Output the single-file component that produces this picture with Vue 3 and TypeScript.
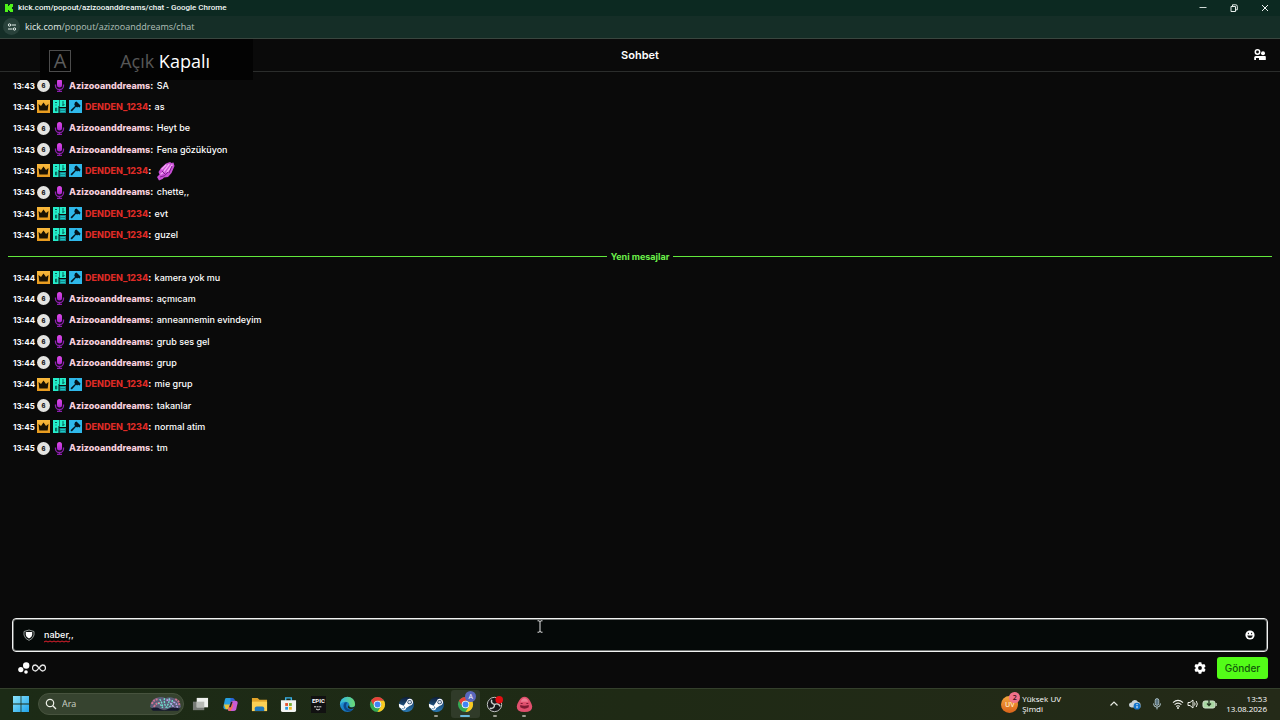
<script setup lang="ts">
import { ref } from 'vue'

interface Message {
  time: string
  user: 'Azizooanddreams' | 'DENDEN_1234'
  text: string
  emote?: boolean
}

const host = 'Azizooanddreams'
const mod = 'DENDEN_1234'

const earlier: Message[] = [
  { time: '13:43', user: host, text: 'SA' },
  { time: '13:43', user: mod, text: 'as' },
  { time: '13:43', user: host, text: 'Heyt be' },
  { time: '13:43', user: host, text: 'Fena gözüküyon' },
  { time: '13:43', user: mod, text: '', emote: true },
  { time: '13:43', user: host, text: 'chette,,' },
  { time: '13:43', user: mod, text: 'evt' },
  { time: '13:43', user: mod, text: 'guzel' },
]

const recent: Message[] = [
  { time: '13:44', user: mod, text: 'kamera yok mu' },
  { time: '13:44', user: host, text: 'açmıcam' },
  { time: '13:44', user: host, text: 'anneannemin evindeyim' },
  { time: '13:44', user: host, text: 'grub ses gel' },
  { time: '13:44', user: host, text: 'grup' },
  { time: '13:44', user: mod, text: 'mie grup' },
  { time: '13:45', user: host, text: 'takanlar' },
  { time: '13:45', user: mod, text: 'normal atim' },
  { time: '13:45', user: host, text: 'tm' },
]

const rows: (Message | null)[] = [...earlier, null, ...recent]
const draft = ref('naber,,')
const query = ref('')
</script>

<template>
  <div class="screen">
    <svg class="defs" aria-hidden="true">
      <defs>
        <linearGradient id="micG" x1="0" y1="0" x2="0" y2="1"><stop offset="0" stop-color="#e04be8" /><stop offset="1" stop-color="#a828d0" /></linearGradient>
        <linearGradient id="crownG" x1="0" y1="0" x2="0" y2="1"><stop offset="0" stop-color="#f9b93c" /><stop offset="1" stop-color="#e79a1e" /></linearGradient>
        <linearGradient id="winG" x1="0" y1="0" x2="1" y2="1"><stop offset="0" stop-color="#8ce4fb" /><stop offset="1" stop-color="#1fa3ea" /></linearGradient>
        <linearGradient id="edgeG" x1="0" y1="0" x2="1" y2="1"><stop offset="0" stop-color="#28a4e2" /><stop offset="1" stop-color="#0c59a4" /></linearGradient>
        <linearGradient id="edgeT" x1="0" y1="0" x2="1" y2="0"><stop offset="0" stop-color="#2fb7e8" /><stop offset="1" stop-color="#6edb70" /></linearGradient>
        <linearGradient id="steamG" x1="0" y1="0" x2="0" y2="1"><stop offset="0" stop-color="#0c1c38" /><stop offset="1" stop-color="#2a7cb8" /></linearGradient>
        <symbol id="steam" viewBox="0 0 18 18">
          <circle cx="9" cy="9" r="8" fill="url(#steamG)" />
          <path d="M1 8.300 6 10.200 9.200 5.500Q10 2.800 12.500 2.900q3.300.3 3.400 3.800-.3 3.200-3.500 3.500L8.800 12.800Q8.200 15.200 5.900 15.200 4 15 3.300 13.200L1.400 12Q.8 10 1 8.300Z" fill="#fff" />
          <circle cx="12.300" cy="6.500" r="2.300" fill="#27476e" />
          <circle cx="12.300" cy="6.500" r="1.400" fill="#dfe8f0" />
          <path d="M4.500 13.200q1.500 1 2.600-.4.500-1.300-.9-2" fill="none" stroke="#2d6a9c" stroke-width=".8" />
        </symbol>
        <symbol id="chrome" viewBox="0 0 18 18">
          <circle cx="9" cy="9" r="8" fill="#34a853" />
          <path d="M2.100 5A8 8 0 0 1 15.900 5H9A4 4 0 0 0 5.500 11Z" fill="#e8413a" />
          <path d="M15.900 5A8 8 0 0 1 9 17L12.500 11A4 4 0 0 0 9 5Z" fill="#fbc921" />
          <circle cx="9" cy="9" r="4" fill="#fff" />
          <circle cx="9" cy="9" r="3.100" fill="#4285f4" />
        </symbol>
      </defs>
    </svg>

    <header class="titlebar">
      <svg class="i10" viewBox="0 0 10 10"><path d="M1 1h3v2h1V2h1V1h3v3H8v2h1v3H6V8H5V7H4v2H1Z" fill="#4ef41a" /></svg>
      <span class="title">kick.com/popout/azizooanddreams/chat - Google Chrome</span>
      <div class="winbtns">
        <button aria-label="Simge durumuna küçült"><svg viewBox="0 0 10 10"><path d="M1.500 4.500h7" stroke="#cfd8d5" stroke-width="1" /></svg></button>
        <button aria-label="Önceki boyut"><svg viewBox="0 0 10 10"><path d="M2 3.500h4.500v5H2ZM3.500 3.200V1.800h3.300a1.500 1.500 0 0 1 1.500 1.500v3.500H7" fill="none" stroke="#e6edea" stroke-width="1" /></svg></button>
        <button aria-label="Kapat"><svg viewBox="0 0 10 10"><path d="m2 2 6 6M8 2 2 8" stroke="#f0f4f2" stroke-width="1" /></svg></button>
      </div>
    </header>

    <div class="address">
      <button class="siteinfo" aria-label="Site bilgileri">
        <svg viewBox="0 0 10 10"><g fill="none" stroke="#e3efeb" stroke-width="1"><circle cx="2.500" cy="3" r="1.200" /><path d="M4.500 3H9" /><circle cx="7.500" cy="7" r="1.200" /><path d="M1 7h4.500" /></g></svg>
      </button>
      <span class="url">kick.com<span class="path">/popout/azizooanddreams/chat</span></span>
    </div>

    <main class="chat">
      <div class="osd">
        <span class="keycap">A</span>
        <span class="states"><span class="off">Açık</span> Kapalı</span>
      </div>

      <div class="chathead">
        <h1>Sohbet</h1>
        <button class="users" aria-label="Kullanıcılar">
          <svg viewBox="0 0 12 12"><circle cx="3.500" cy="3" r="2.200" fill="none" stroke="#fff" stroke-width="1.500" /><circle cx="9" cy="4.200" r="2" fill="#fff" /><path d="M.2 11V8.500Q.2 7 1.800 7H11q.8 0 .8.800V11H5V9H2v2Z" fill="#fff" /></svg>
        </button>
      </div>

      <ul class="messages">
        <template v-for="(m, i) in rows" :key="i">
          <li v-if="!m" class="divider"><span>Yeni mesajlar</span></li>
          <li v-else class="msg">
            <time>{{ m.time }}</time>
            <template v-if="m.user === host">
              <span class="level">6</span>
              <svg class="badge" viewBox="0 0 13 13"><rect x="4" y="0" width="5" height="8.500" rx="2.500" fill="url(#micG)" /><path d="M2.500 5.500v1.500a4 3.500 0 0 0 8 0V5.500M6.500 10.500V12M4 12.400h5" fill="none" stroke="#8d1fae" stroke-width="1.300" /></svg>
            </template>
            <template v-else>
              <svg class="badge" viewBox="0 0 13 13"><rect width="13" height="13" fill="url(#crownG)" /><path d="M1.500 4 4 6l2.500-3.500L9 6l2.500-2-.8 6.500H2.300Z" fill="#1a1203" /></svg>
              <svg class="badge" viewBox="0 0 13 13"><path d="M0 0h6v6h-.5v7H0Z" fill="#24eecb" /><path d="M6.500 0H13v7H6.500Z" fill="#24eecb" /><path d="M6.500 8H13v5H6.500Z" fill="#138f92" /><path d="M2 2.500h2M3 4.500v1M2.500 8h1.200v3H2.500ZM9 2h2M9 4h2v1.200H9" fill="none" stroke="#06635a" stroke-width="1" /><path d="M7.500 9.500H12M7.500 11.500H12" stroke="#1fd3d0" stroke-width=".8" /></svg>
              <svg class="badge" viewBox="0 0 13 13"><rect width="13" height="13" fill="#2fb8ea" /><path d="m6 2.200 1.500-.8L11.500 5.500 10.800 7.500 9 6.800 8.200 7.500 7 6.800 2.800 11.500 1.500 10.300 6 6 5.300 4.500Z" fill="#04131c" /></svg>
            </template>
            <span class="body"><strong :class="m.user === host ? 'pink' : 'red'">{{ m.user }}</strong><b>:</b> {{ m.text }}</span>
            <svg v-if="m.emote" class="emote" viewBox="0 0 20 20"><path d="M1 16 3 19.500 6.500 18 8 16.500 12 16 15.500 12 18.500 5 17.500 1.500 15.500 2 14 1 10 2.500 5 7 2.500 11 3.500 13.500Z" fill="#c94fd6" /><path d="m6 8 4-4M8.500 9.500l4.500-6M11 11l5-7M5 13l3-2" stroke="#f3a9f5" stroke-width="1.400" stroke-linecap="round" /><path d="M4 16q5 0 8-5M6 10l3 3M16 5l-3 7" fill="none" stroke="#7d1f8e" stroke-width="1" /></svg>
          </li>
        </template>
      </ul>

      <form class="composer" @submit.prevent>
        <div class="field">
          <svg class="i12" viewBox="0 0 12 12"><path d="M1 2.500Q6-.5 11 2.500V6Q10 10 6 11.400 2 10 1 6Z" fill="none" stroke="#8f9693" stroke-width="1" /><path d="M2.800 3h6.400V6Q8.700 8.700 6 9.400 3.300 8.700 2.800 6Z" fill="#fff" /></svg>
          <div class="draft">
            <input v-model="draft" aria-label="Mesaj gönder" spellcheck="false" />
            <svg class="spell" viewBox="0 0 26 3" aria-hidden="true"><path d="M0 2 2 1 4 2 6 1 8 2 10 1 12 2 14 1 16 2 18 1 20 2 22 1 24 2 26 1" fill="none" stroke="#e0202c" stroke-width="1" /></svg>
          </div>
          <button type="button" class="smile" aria-label="İfadeler">
            <svg class="i10" viewBox="0 0 10 10"><circle cx="5" cy="5" r="4.600" fill="#fff" /><path d="M2.200 5.400h5.600Q7.400 8 5 8T2.200 5.400Z" fill="#101312" /><path d="M3.400 2.800v1.400M6.600 2.800v1.400" stroke="#101312" stroke-width="1" /></svg>
          </button>
          <svg class="caret" viewBox="0 0 7 13" aria-hidden="true"><path d="M1 .8h1.500l1 .8 1-.8H6M3.500 1.500v10M1 12.200h1.500l1-.8 1 .8H6" fill="none" stroke="#e4e4e4" stroke-width="1" /></svg>
        </div>
        <div class="actions">
          <button type="button" class="points" aria-label="Kanal puanları">
            <svg class="i12" viewBox="0 0 12 12"><g fill="#fff"><circle cx="8.200" cy="3.500" r="3.200" /><circle cx="2.800" cy="7.600" r="2.600" /><circle cx="8" cy="10" r="1.800" /></g></svg>
            <svg class="inf" viewBox="0 0 14 8"><path d="M7 4C5.500 2 4.800 1 3.500 1a3 3 0 0 0 0 6C4.800 7 5.500 6 7 4s2.200-3 3.500-3a3 3 0 0 1 0 6C9.200 7 8.500 6 7 4Z" fill="none" stroke="#e8e8e8" stroke-width="1.300" /></svg>
          </button>
          <button type="button" class="gear" aria-label="Ayarlar">
            <svg class="i12" viewBox="0 0 12 12"><path fill="#fff" fill-rule="evenodd" d="M4.700.3h2.600l.4 1.600 1 .6 1.600-.5 1.300 2.200-1.200 1.200v1.200l1.200 1.200-1.300 2.200-1.600-.5-1 .6-.4 1.600H4.700l-.4-1.600-1-.6-1.600.5L.4 7.800l1.200-1.200V5.400L.4 4.200 1.700 2l1.600.5 1-.6ZM6 4.100a1.900 1.900 0 1 0 0 3.800 1.900 1.900 0 0 0 0-3.800Z" /></svg>
          </button>
          <button class="send">Gönder</button>
        </div>
      </form>
    </main>

    <footer class="taskbar">
      <button class="start" aria-label="Başlat"><svg viewBox="0 0 16 16"><path d="M0 0h7.600v7.600H0ZM8.400 0H16v7.600H8.400ZM0 8.400h7.600V16H0ZM8.400 8.400H16V16H8.400Z" fill="url(#winG)" /></svg></button>
      <label class="search">
        <svg class="i12" viewBox="0 0 12 12"><circle cx="5" cy="5" r="3.700" fill="none" stroke="#edf0e8" stroke-width="1.200" /><path d="m7.800 7.800 3.200 3.200" stroke="#edf0e8" stroke-width="1.300" /></svg>
        <input v-model="query" placeholder="Ara" aria-label="Ara" />
        <svg class="coral" viewBox="0 0 34 16"><path d="M1 11Q2 2 10 1q4-1 7 1 4-2 9 0 6 2 7 9l-4 3H6Z" fill="#5a5d78" /><path d="M3 8q2-5 7-5M5 11q3-5 7-4M27 3q5 2 4 7" fill="none" stroke="#cf7391" stroke-width="2" stroke-dasharray="2 1" /><path d="M11 3q3 4 3 9M16 2q-1 5 2 10M21 2q0 5-3 9M24 4q0 6-5 8M9 7q3 1 5 5" fill="none" stroke="#6fdcca" stroke-width="1.400" stroke-dasharray="2 1" /><path d="M25 6q4 1 4 6M22 7q2 3 5 5M18 4h4" fill="none" stroke="#b7a5ea" stroke-width="1.600" stroke-dasharray="2 1" /><path d="M2 13q6-3 9 0 5 3 9 0 6-3 12 0l-2 2H4Z" fill="#15182e" /></svg>
      </label>

      <nav class="apps">
        <button aria-label="Görev görünümü"><svg viewBox="0 0 18 18"><path d="M1 6h12v9H1Z" fill="#777b76" /><path d="M5 2h12v10H5Z" fill="#eef0ed" /><path d="M5 6h8v6H5Z" fill="#b7bab5" /></svg></button>
        <button aria-label="Copilot"><svg viewBox="0 0 18 18"><path d="M4 2h6q2 0 1.400 2L9 12q-.7 2-3 2H4q-3 0-2.500-3L3 4q.3-1.500 1-2Z" fill="#269fe0" /><path d="M2 9 4 14h2q2 0 3-2l1-3Z" fill="#e6c43a" /><path d="M9 2h2q2 0 2.500 2l.5 1h-3L9 12Z" fill="#2964d8" /><path d="M12 5h2q3 0 2.500 3L15 14q-.6 2-3 2H8q-2 0-1.500-2L9 7q.8-2 3-2Z" fill="#c85bd6" /><path d="m7 12 3-1 1-3 1 1-1 4-2 3H8q-2 0-1-4Z" fill="#f16c57" /><path d="m9.500 6-2 6h1.800l2-6Z" fill="#1f2b17" /></svg></button>
        <button aria-label="Dosya Gezgini"><svg viewBox="0 0 18 18"><path d="M1 2h6l2 2h8v12H1Z" fill="#e2a42a" /><path d="M1 6h16v10H1Z" fill="#fbd055" /><path d="M4 16v-3q0-2 2-2h6q2 0 2 2v3Z" fill="#2079bd" /></svg></button>
        <button aria-label="Microsoft Store"><svg viewBox="0 0 18 18"><path d="M6 5V2h6v3" fill="none" stroke="#39b1e8" stroke-width="1.500" /><path d="M1 4.500h16V15q0 2-2 2H3q-2 0-2-2Z" fill="#f2f4f2" /><path d="M5.500 7.500h3v3h-3Z" fill="#e5512b" /><path d="M9.500 7.500h3v3h-3Z" fill="#73ac2f" /><path d="M5.500 11.500h3v3h-3Z" fill="#2a9ae0" /><path d="M9.500 11.500h3v3h-3Z" fill="#eeb420" /></svg></button>
        <button class="epic" aria-label="Epic Games"><span>EPIC</span><svg viewBox="0 0 14 5"><path d="M3 .8h8" stroke="#ddd" stroke-dasharray="2 .6" /><path d="m5 3 2 1 2-1" fill="none" stroke="#ddd" /></svg></button>
        <button aria-label="Microsoft Edge"><svg viewBox="0 0 18 18"><circle cx="9" cy="9" r="8" fill="url(#edgeG)" /><path d="M1 9a8 8 0 0 1 16-.5q.2 3.500-3.800 3.500-2.700 0-2.700-1.300 0-.7.400-1.200Q10.500 6 6.500 6 3 6 1 9Z" fill="url(#edgeT)" /><path d="M6 7q-3 4 1 8 3 2 7-.5-6 .5-6.500-4Q7.500 8 9 7 7.500 6 6 7Z" fill="#0d4789" /><path d="M11 9.500q-1 2.800 3 2.600l3-1.100-.7 1.800q-4 2-6.500 0-1.300-1.400 1.200-3.300Z" fill="#1f2b17" /></svg></button>
        <button aria-label="Google Chrome"><svg viewBox="0 0 18 18"><use href="#chrome" /></svg></button>
        <button aria-label="Steam"><svg viewBox="0 0 18 18"><use href="#steam" /></svg></button>
        <button class="open" aria-label="Steam penceresi"><svg viewBox="0 0 18 18"><use href="#steam" /></svg></button>
        <button class="open active" aria-label="Google Chrome penceresi"><svg viewBox="0 0 18 18"><use href="#chrome" /></svg><span class="profile">A</span></button>
        <button class="open" aria-label="OBS Studio"><svg viewBox="0 0 18 18"><circle cx="9" cy="9" r="7.600" fill="#171819" stroke="#c9ccca" stroke-width="1" /><path d="M9 9q-4-1-3-5M9 9q4-2 6 2M9 9q0 5-5 4" fill="none" stroke="#c9ccca" stroke-width="1.500" /><circle cx="14" cy="4" r="4" fill="#e30d12" /></svg></button>
        <button class="open" aria-label="Oyun"><svg viewBox="0 0 18 18"><path d="M9 .8q3.500 0 5.800 4.200T17.200 11q0 6-8.200 6T.8 11q0-2 2.400-6T9 .8Z" fill="#e0506e" /><path d="M9 2.500q2.500 0 4 3.500H5q1.500-3.500 4-3.500Z" fill="#ee7b92" /><path d="M4.500 9.500q4.500 1.500 9 0v2.500q-4.500 3-9 0Z" fill="#7e1a31" /><path d="M5 8h2M11 8h2" stroke="#7e1a31" stroke-width="1.200" /></svg></button>
      </nav>

      <div class="weather">
        <span class="uv">UV<span class="count">2</span></span>
        <span class="wtext">Yüksek UV<br />Şimdi</span>
      </div>
      <div class="tray">
        <button class="up" aria-label="Gizli simgeleri göster"><svg viewBox="0 0 12 12"><path d="m2.500 7.500 3.500-3.500 3.500 3.500" fill="none" stroke="#e8ebe4" stroke-width="1.200" /></svg></button>
        <button class="cloud" aria-label="OneDrive"><svg viewBox="0 0 12 12"><path d="M2.500 9.500a2.500 2.500 0 0 1 0-5A3.500 3.500 0 0 1 9 4a2.800 2.800 0 0 1 2.500 3v2.500Z" fill="#c8d2d8" /><circle cx="8" cy="8.200" r="3.400" fill="#1474cc" /><path d="M8 6v1M8 7.800v2.400" stroke="#fff" stroke-width="1" /></svg></button>
        <button class="mic" aria-label="Mikrofon"><svg viewBox="0 0 12 12"><rect x="4.200" y=".6" width="3.600" height="6.800" rx="1.800" fill="#5b7480" stroke="#b6cbd2" stroke-width=".8" /><path d="M2.500 5.500q0 3.700 3.500 3.700t3.500-3.700M6 9.200v2.200" fill="none" stroke="#b6cbd2" stroke-width="1" /></svg></button>
        <button class="net" aria-label="Ağ, ses ve pil">
          <svg viewBox="0 0 12 12"><path d="M1 4.700q5-4.600 10 0M2.600 6.600q3.400-3 6.800 0M4.200 8.500q1.800-1.500 3.600 0" fill="none" stroke="#eef0ea" stroke-width="1.100" /><circle cx="6" cy="10" r="1" fill="#eef0ea" /></svg>
          <svg viewBox="0 0 12 12"><path d="M1 4.500h2L6 2v8L3 7.500H1Z" fill="none" stroke="#eef0ea" stroke-width="1" /><path d="M7.500 4.500q1.200 1.500 0 3M9.200 3q2.300 3 0 6" fill="none" stroke="#eef0ea" stroke-width="1" /></svg>
          <svg class="bat" viewBox="0 0 15 12"><rect x="1" y="3" width="12" height="7" rx="2" fill="#a9d7a3" stroke="#d5e4d0" /><path d="M14.200 5v3" stroke="#d5e4d0" /><path d="M7 1v6M5 5.500l2 2 2-2" fill="none" stroke="#24351f" stroke-width="1.300" /></svg>
        </button>
        <div class="clock">13:53<br />13.08.2026</div>
      </div>
    </footer>
  </div>
</template>

<style>
html, body { background: #0a0a0a; }
</style>

<style scoped>
* { box-sizing: border-box; }
.screen { min-height: 100vh; display: flex; flex-direction: column; background: #0a0a0a; color: #fff; font-family: Inter, "Noto Sans", sans-serif; font-size: 10px; }
.defs { position: absolute; width: 0; height: 0; }
svg { display: block; flex: none; }
button { background: none; border: 0; padding: 0; color: inherit; font: inherit; }
.i10 { width: 10px; height: 10px; }
.i12 { width: 12px; height: 12px; }

.titlebar { height: 16px; padding-left: 4px; display: flex; align-items: center; gap: 4px; background: #0c2921; }
.title { font: 500 8px/14px Roboto, sans-serif; color: #f2f7f5; flex: 1; }
.winbtns { display: flex; }
.winbtns button { width: 31px; height: 15px; display: grid; place-items: center; }
.winbtns svg { width: 10px; height: 10px; }
.address { height: 23px; padding: 0 3px 1px; display: flex; align-items: center; gap: 5px; background: #152e27; border-bottom: 1px solid #39463f; }
.siteinfo { width: 17px; height: 17px; border-radius: 50%; background: #29423b; display: grid; place-items: center; }
.siteinfo svg { width: 10px; height: 10px; }
.url { font: 9px/14px "Open Sans", sans-serif; color: #e2ebe8; }
.path { color: #b3c0bb; }

.chat { flex: 1; display: flex; flex-direction: column; position: relative; }
.chathead { height: 33px; border-bottom: 1px solid #2b2d2c; display: flex; align-items: center; justify-content: center; position: relative; }
h1 { margin: 0; font-size: 11px; line-height: 16px; font-weight: 600; }
.users { position: absolute; right: 14px; top: 10px; }
.users svg { width: 12px; height: 12px; }
.osd { position: absolute; left: 40px; top: 0; width: 213px; height: 41px; background: #030303; z-index: 2; display: flex; align-items: center; justify-content: space-between; padding: 2px 43px 0 9px; font-family: "Open Sans", sans-serif; }
.keycap { width: 22px; height: 22px; border: 1px solid #4c4c4c; color: #5c5c5c; font-size: 20px; line-height: 20px; text-align: center; }
.states { font-size: 18px; line-height: 24px; white-space: nowrap; }
.off { color: #575757; }

.messages { list-style: none; margin: 0; padding: 3px 8px 0; min-height: 387px; display: grid; grid-auto-rows: 1fr; }
.msg { display: flex; align-items: center; gap: 3px; padding-left: 5px; line-height: 16px; }
time { width: 21px; font-size: 8px; font-weight: 700; white-space: nowrap; }
.level { width: 13px; height: 13px; border-radius: 50%; background: #e3e3e0; color: #161616; font-size: 6px; font-weight: 800; line-height: 13px; text-align: center; }
.badge { width: 13px; height: 13px; }
.body { font-size: 9px; font-weight: 500; white-space: pre; }
.body b { margin-right: 1px; }
.pink { color: #f6cfdd; font-weight: 800; }
.red { color: #dd2a26; font-weight: 800; }
.emote { width: 20px; height: 20px; margin-left: -2px; }
.divider { display: flex; align-items: center; gap: 4px; color: #6cf04a; font-size: 9px; font-weight: 700; }
.divider::before, .divider::after { content: ""; flex: 1; height: 1px; background: #62e83c; }

.composer { margin-top: auto; padding: 0 12px 9px; }
.field { height: 34px; border: 1px solid #f1f3f2; box-shadow: inset 0 0 0 1px #6d706f; border-radius: 4px; background: #050908; display: flex; align-items: center; padding: 0 12px 0 10px; gap: 9px; position: relative; }
.draft { position: relative; flex: 1; display: flex; }
.draft input { width: 100%; border: 0; padding: 0; background: none; color: #fff; font: 500 9px/16px Inter, sans-serif; outline: none; }
.spell { position: absolute; left: 0; bottom: 0; width: 26px; height: 3px; }
.caret { position: absolute; left: 42%; top: 1px; width: 7px; height: 13px; transform: translateX(-50%); }
.actions { display: flex; align-items: center; margin-top: 5px; height: 22px; padding-left: 6px; }
.points { display: flex; align-items: center; gap: 2px; margin-right: auto; }
.inf { width: 14px; height: 8px; }
.gear { margin-right: 11px; }
.send { width: 51px; height: 22px; border-radius: 3px; background: #53fc18; color: #12570a; font-size: 10px; font-weight: 500; }

.taskbar { height: 32px; padding-bottom: 1px; border-top: 1px solid #34402c; background: linear-gradient(90deg, #1c2b16, #1f2a15 50%, #242a18); display: flex; align-items: center; font-family: "Open Sans", sans-serif; }
.start { margin: 0 9px 0 13px; }
.start svg { width: 16px; height: 16px; }
.search { width: 146px; height: 22px; border-radius: 11px; border: 1px solid #47533e; background: #36432f; display: flex; align-items: center; gap: 5px; padding: 0 1px 0 6px; }
.search input { flex: 1; min-width: 0; border: 0; padding: 0; background: none; color: #fff; font: 9px/14px "Open Sans", sans-serif; outline: none; }
.search input::placeholder { color: #cdd2c6; opacity: 1; }
.coral { width: 33px; height: 16px; }
.apps { width: 353px; margin-left: 2px; display: grid; grid-template-columns: repeat(12, 1fr); }
.apps button { height: 28px; display: grid; place-items: center; position: relative; }
.apps svg { width: 17px; height: 17px; }
.open::after { content: ""; position: absolute; left: 50%; bottom: 1px; width: 4px; height: 2px; margin-left: -2px; border-radius: 1px; background: #9a9d90; }
.active { background: #303b29; border-radius: 3px; }
.active::after { width: 10px; margin-left: -5px; background: #6bbbdc; }
.profile { position: absolute; right: 4px; top: 1px; width: 11px; height: 11px; border-radius: 50%; background: #5a67bd; color: #fff; font-size: 7px; line-height: 11px; }
.apps .epic { width: 15px; height: 17px; margin: auto; background: #111; display: flex; flex-direction: column; align-items: center; gap: 1px; padding-top: 1px; }
.epic span { font: 700 6px/8px Roboto, sans-serif; }
.apps .epic svg { width: 14px; height: 5px; }
.weather { margin-left: auto; display: flex; align-items: center; gap: 4px; }
.uv { width: 17px; height: 17px; border-radius: 50%; background: linear-gradient(#f3a63e, #d9631a); position: relative; font-size: 7px; line-height: 17px; font-weight: 600; text-align: center; color: #ffeac0; }
.count { position: absolute; right: -2px; top: -4px; width: 11px; height: 11px; border-radius: 50%; background: #f0718a; color: #371018; font-size: 7px; line-height: 11px; }
.wtext { font-size: 8px; line-height: 10px; }
.tray { display: flex; align-items: center; padding-right: 13px; margin-left: 47px; }
.tray svg { width: 12px; height: 12px; }
.up { margin-right: 9px; }
.cloud { margin-right: 10px; }
.mic { margin-right: 9px; }
.net { display: flex; align-items: center; gap: 3px; }
.net .bat { width: 15px; }
.clock { width: 50px; font-size: 8px; line-height: 10px; text-align: right; }
</style>
